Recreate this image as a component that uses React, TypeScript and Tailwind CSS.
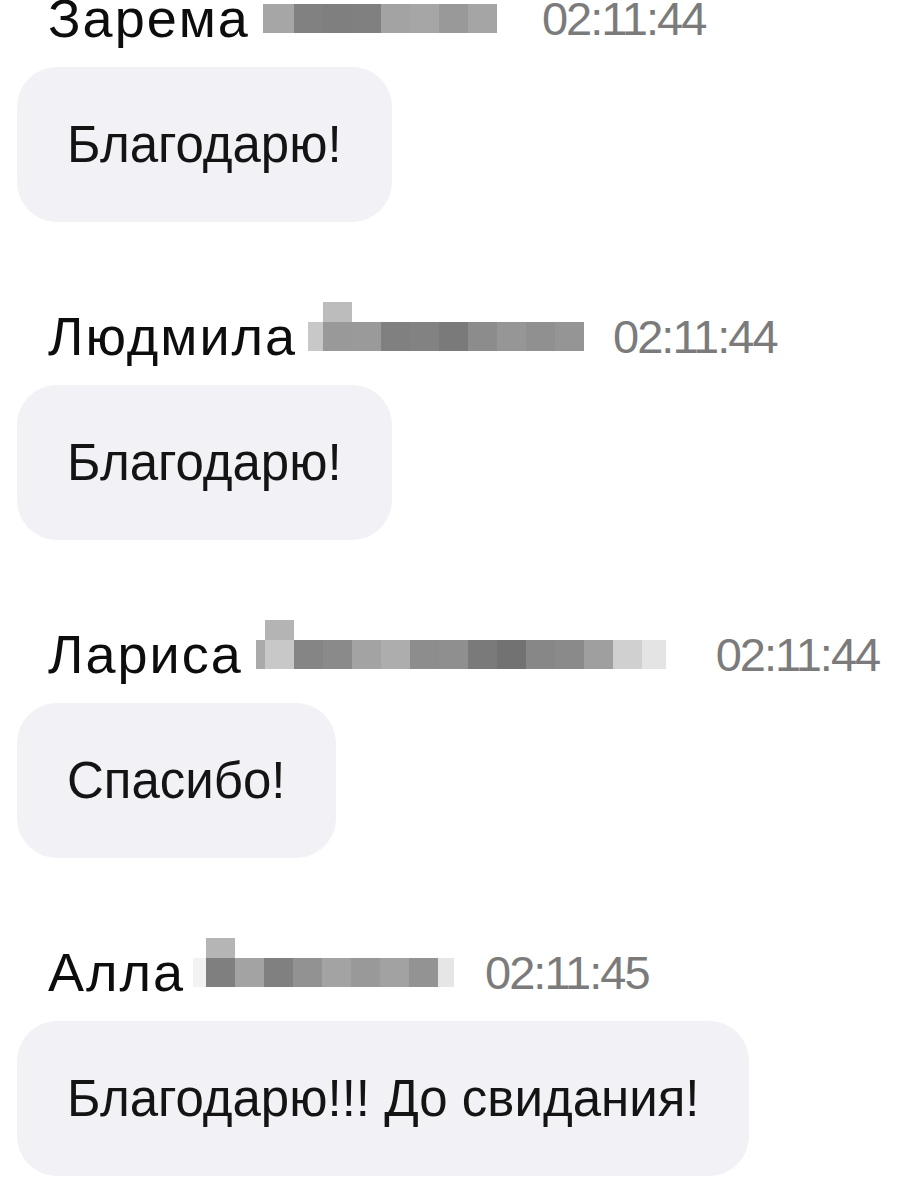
import React from 'react';

type Cell = { w: number; c: string };

interface Message {
  name: string;
  time: string;
  text: string;
  // pixelated surname, drawn as blocks of grey
  cells: Cell[];
  topCell?: { left: number; c: string };
  nameGap: string;
  timeGap: string;
}

const messages: Message[] = [
  {
    name: 'Зарема',
    time: '02:11:44',
    text: 'Благодарю!',
    cells: [
      { w: 31, c: 'bg-[#a6a6a6]' },
      { w: 29, c: 'bg-[#818181]' },
      { w: 29, c: 'bg-[#7f7f7f]' },
      { w: 29, c: 'bg-[#808080]' },
      { w: 29, c: 'bg-[#a3a3a3]' },
      { w: 29, c: 'bg-[#a6a6a6]' },
      { w: 29, c: 'bg-[#999999]' },
      { w: 29, c: 'bg-[#a5a5a5]' },
    ],
    nameGap: 'ml-[13px]',
    timeGap: 'ml-[45px]',
  },
  {
    name: 'Людмила',
    time: '02:11:44',
    text: 'Благодарю!',
    cells: [
      { w: 15, c: 'bg-[#c8c8c8]' },
      { w: 29, c: 'bg-[#999999]' },
      { w: 29, c: 'bg-[#9a9a9a]' },
      { w: 29, c: 'bg-[#808080]' },
      { w: 29, c: 'bg-[#828282]' },
      { w: 29, c: 'bg-[#7a7a7a]' },
      { w: 29, c: 'bg-[#8c8c8c]' },
      { w: 29, c: 'bg-[#969696]' },
      { w: 29, c: 'bg-[#909090]' },
      { w: 29, c: 'bg-[#959595]' },
    ],
    topCell: { left: 15, c: 'bg-[#bcbcbc]' },
    nameGap: 'ml-[11px]',
    timeGap: 'ml-[29px]',
  },
  {
    name: 'Лариса',
    time: '02:11:44',
    text: 'Спасибо!',
    cells: [
      { w: 9, c: 'bg-[#aaaaaa]' },
      { w: 29, c: 'bg-[#c8c8c8]' },
      { w: 29, c: 'bg-[#858585]' },
      { w: 29, c: 'bg-[#8a8a8a]' },
      { w: 29, c: 'bg-[#a3a3a3]' },
      { w: 29, c: 'bg-[#adadad]' },
      { w: 29, c: 'bg-[#8d8d8d]' },
      { w: 29, c: 'bg-[#8f8f8f]' },
      { w: 29, c: 'bg-[#7a7a7a]' },
      { w: 29, c: 'bg-[#727272]' },
      { w: 29, c: 'bg-[#878787]' },
      { w: 29, c: 'bg-[#8a8a8a]' },
      { w: 29, c: 'bg-[#9f9f9f]' },
      { w: 29, c: 'bg-[#d0d0d0]' },
      { w: 24, c: 'bg-[#e4e4e4]' },
    ],
    topCell: { left: 9, c: 'bg-[#b4b4b4]' },
    nameGap: 'ml-[13px]',
    timeGap: 'ml-[50px]',
  },
  {
    name: 'Алла',
    time: '02:11:45',
    text: 'Благодарю!!! До свидания!',
    cells: [
      { w: 13, c: 'bg-[#f2f2f2]' },
      { w: 29, c: 'bg-[#7f7f7f]' },
      { w: 29, c: 'bg-[#a3a3a3]' },
      { w: 29, c: 'bg-[#808080]' },
      { w: 29, c: 'bg-[#929292]' },
      { w: 29, c: 'bg-[#a3a3a3]' },
      { w: 29, c: 'bg-[#999999]' },
      { w: 29, c: 'bg-[#a2a2a2]' },
      { w: 29, c: 'bg-[#939393]' },
      { w: 16, c: 'bg-[#e6e6e6]' },
    ],
    topCell: { left: 13, c: 'bg-[#b5b5b5]' },
    nameGap: 'ml-[8px]',
    timeGap: 'ml-[31px]',
  },
];

const Mosaic: React.FC<{ cells: Cell[]; topCell?: { left: number; c: string } }> = ({ cells, topCell }) => (
  <div className="relative flex h-[29px] shrink-0">
    {cells.map((cell, i) => (
      <div key={i} className={`h-full ${cell.c}`} style={{ width: cell.w }} />
    ))}
    {topCell && (
      <div className={`absolute -top-[20px] h-[20px] w-[29px] ${topCell.c}`} style={{ left: topCell.left }} />
    )}
  </div>
);

const ChatMessage: React.FC<{ msg: Message; first?: boolean }> = ({ msg, first }) => (
  <div className={first ? '-mt-[7px]' : 'mt-[89px]'}>
    <div className="flex items-center pl-[48px] h-[50px]">
      <span className="text-[54px] leading-none text-[#0d0d0d] tracking-[2px]">{msg.name}</span>
      <div className={msg.nameGap}>
        <Mosaic cells={msg.cells} topCell={msg.topCell} />
      </div>
      <span className={`${msg.timeGap} text-[47px] leading-none text-[#7b7b7b] tracking-[-2px]`}>{msg.time}</span>
    </div>
    <div className="mt-[24px] pl-[17px]">
      <div className="inline-flex h-[155px] items-center rounded-[40px] bg-[#f1f1f6] px-[50px]">
        <span className="text-[51px] leading-none text-[#141414]">{msg.text}</span>
      </div>
    </div>
  </div>
);

export default function App() {
  return (
    <div
      className="h-[1192px] w-[912px] overflow-hidden bg-white"
      style={{ fontFamily: '"Liberation Sans", Arial, sans-serif' }}
    >
      {messages.map((m, i) => (
        <ChatMessage key={i} msg={m} first={i === 0} />
      ))}
    </div>
  );
}
